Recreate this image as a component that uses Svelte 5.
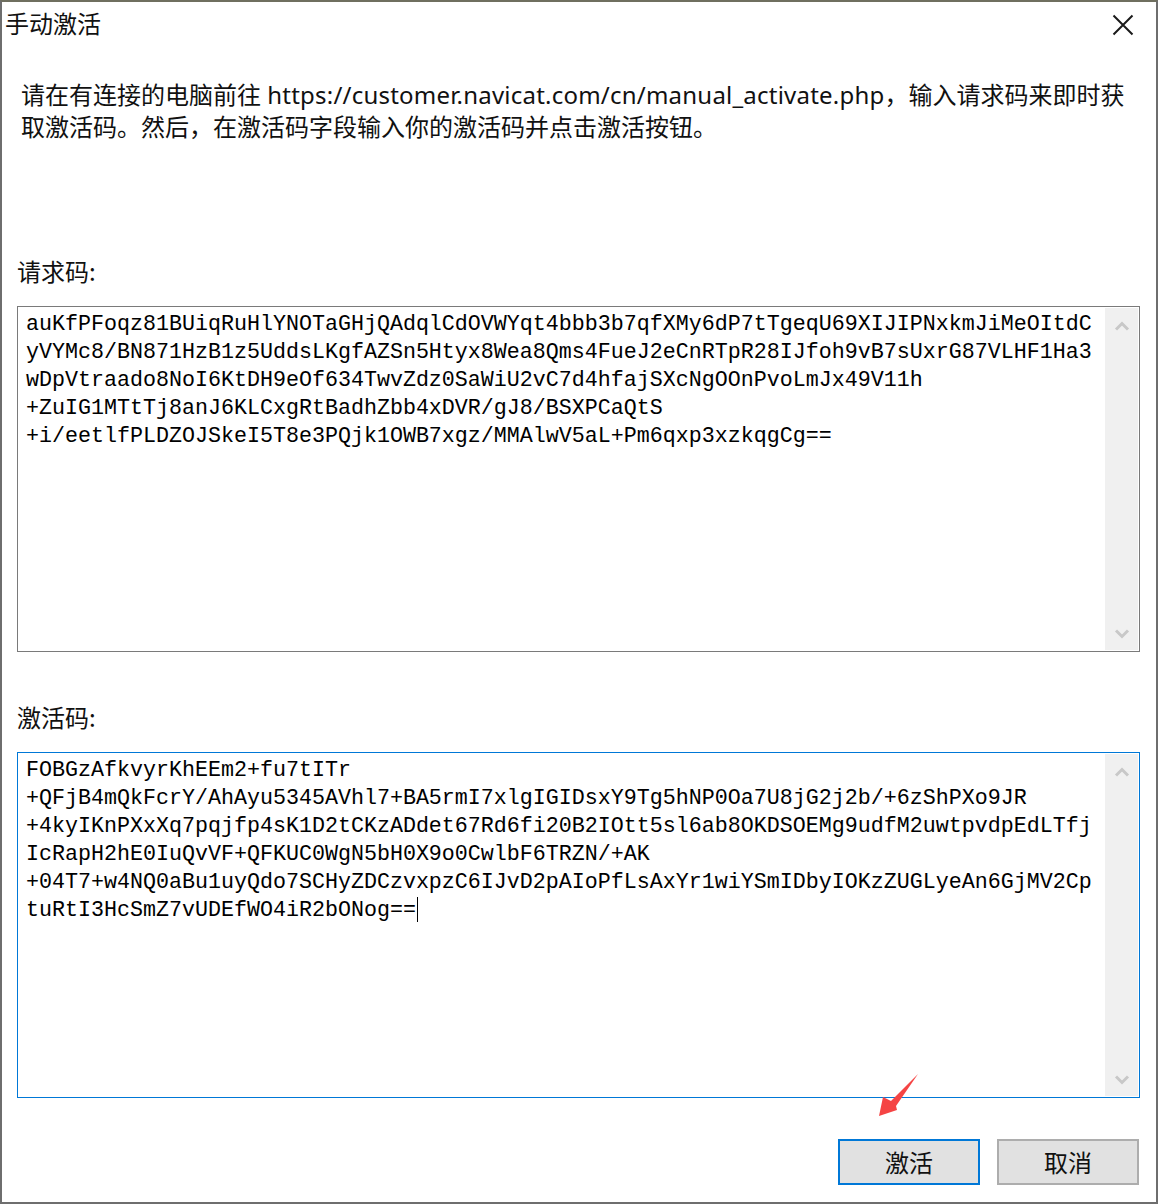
<script>
  const requestLines = [
    'auKfPFoqz81BUiqRuHlYNOTaGHjQAdqlCdOVWYqt4bbb3b7qfXMy6dP7tTgeqU69XIJIPNxkmJiMeOItdC',
    'yVYMc8/BN871HzB1z5UddsLKgfAZSn5Htyx8Wea8Qms4FueJ2eCnRTpR28IJfoh9vB7sUxrG87VLHF1Ha3',
    'wDpVtraado8NoI6KtDH9eOf634TwvZdz0SaWiU2vC7d4hfajSXcNgOOnPvoLmJx49V11h',
    '+ZuIG1MTtTj8anJ6KLCxgRtBadhZbb4xDVR/gJ8/BSXPCaQtS',
    '+i/eetlfPLDZOJSkeI5T8e3PQjk1OWB7xgz/MMAlwV5aL+Pm6qxp3xzkqgCg=='
  ];
  const activationLines = [
    'FOBGzAfkvyrKhEEm2+fu7tITr',
    '+QFjB4mQkFcrY/AhAyu5345AVhl7+BA5rmI7xlgIGIDsxY9Tg5hNP0Oa7U8jG2j2b/+6zShPXo9JR',
    '+4kyIKnPXxXq7pqjfp4sK1D2tCKzADdet67Rd6fi20B2IOtt5sl6ab8OKDSOEMg9udfM2uwtpvdpEdLTfj',
    'IcRapH2hE0IuQvVF+QFKUC0WgN5bH0X9o0CwlbF6TRZN/+AK',
    '+04T7+w4NQ0aBu1uyQdo7SCHyZDCzvxpzC6IJvD2pAIoPfLsAxYr1wiYSmIDbyIOKzZUGLyeAn6GjMV2Cp',
    'tuRtI3HcSmZ7vUDEfWO4iR2bONog=='
  ];
</script>

<div class="dialog">
  <header class="titlebar">
    <span class="title">手动激活</span>
    <button class="close" aria-label="关闭">
      <svg width="22" height="22" viewBox="0 0 22 22">
        <path d="M1.5 1.5 L20.5 20.5 M20.5 1.5 L1.5 20.5" stroke="#1a1a1a" stroke-width="2" fill="none" />
      </svg>
    </button>
  </header>

  <p class="intro">请在有连接的电脑前往 <span class="url">https://customer.navicat.com/cn/manual_activate.php</span>，输入请求码来即时获<br />取激活码。然后，在激活码字段输入你的激活码并点击激活按钮。</p>

  <div class="label first">请求码:</div>
  <div class="field">
    <div class="code">
      {#each requestLines as line}
        <div class="line">{line}</div>
      {/each}
    </div>
    <div class="scrollbar">
      <svg width="16" height="10" viewBox="0 0 16 10"><path d="M2 8.5 L8 2.5 L14 8.5" /></svg>
      <svg width="16" height="10" viewBox="0 0 16 10"><path d="M2 1.5 L8 7.5 L14 1.5" /></svg>
    </div>
  </div>

  <div class="label second">激活码:</div>
  <div class="field focused">
    <div class="code">
      {#each activationLines as line, i}
        <div class="line">{line}{#if i === activationLines.length - 1}<span class="caret"></span>{/if}</div>
      {/each}
    </div>
    <div class="scrollbar">
      <svg width="16" height="10" viewBox="0 0 16 10"><path d="M2 8.5 L8 2.5 L14 8.5" /></svg>
      <svg width="16" height="10" viewBox="0 0 16 10"><path d="M2 1.5 L8 7.5 L14 1.5" /></svg>
    </div>
  </div>

  <footer class="actions">
    <button class="btn primary">激活</button>
    <button class="btn">取消</button>
  </footer>

  <svg class="arrow" width="44" height="48" viewBox="0 0 44 48">
    <polygon points="43,3 21,35 22,39 4,45 8,26 16,30" fill="#f54444" />
  </svg>
</div>

<style>
  :global(body) {
    margin: 0;
    background: #fff;
  }

  .dialog {
    position: relative;
    box-sizing: border-box;
    width: 1158px;
    height: 1204px;
    background: #fff;
    border-top: 2px solid #6f6f5f;
    border-left: 2px solid #6e6e6e;
    border-right: 2px solid #6e6e6e;
    border-bottom: 2px solid #6e6e6e;
    font-family: "Noto Sans CJK SC", "Noto Sans", sans-serif;
    color: #111;
  }

  .titlebar {
    display: flex;
    justify-content: space-between;
    align-items: center;
    height: 46px;
    padding-left: 3px;
    padding-right: 22px;
  }

  .title {
    font-size: 24px;
    line-height: 42px;
    padding-bottom: 4px;
  }

  .close {
    display: flex;
    padding: 0;
    border: 0;
    background: none;
  }

  .intro {
    margin: 31px 0 0 19px;
    font-family: "Noto Sans", "Noto Sans CJK SC", sans-serif;
    font-size: 24px;
    line-height: 32px;
    white-space: nowrap;
  }

  .url {
    letter-spacing: 0.22px;
  }

  .label {
    margin-left: 15px;
    font-size: 24px;
    line-height: 32px;
  }

  .label.first {
    margin-top: 112px;
  }

  .label.second {
    margin-top: 49px;
  }

  .field {
    display: flex;
    box-sizing: border-box;
    width: 1123px;
    height: 346px;
    margin: 19px 0 0 15px;
    padding: 1px;
    border: 1px solid #7a7a7a;
  }

  .field.focused {
    border-color: #0078d7;
  }

  .code {
    flex: 1;
    padding: 3px 0 0 7px;
    font-family: "Liberation Mono", monospace;
    font-size: 21.67px;
    line-height: 28px;
    color: #000;
    white-space: pre;
    overflow: hidden;
  }

  .caret {
    display: inline-block;
    width: 1px;
    height: 25px;
    margin-left: 1px;
    background: #000;
    vertical-align: -6px;
  }

  .scrollbar {
    display: flex;
    flex-direction: column;
    justify-content: space-between;
    align-items: center;
    box-sizing: border-box;
    width: 33px;
    padding: 13px 0 11px;
    background: #f0f0f0;
  }

  .scrollbar path {
    fill: none;
    stroke: #c8c8c8;
    stroke-width: 3;
  }

  .actions {
    display: flex;
    justify-content: flex-end;
    gap: 17px;
    margin-top: 41px;
    padding-right: 17px;
  }

  .btn {
    box-sizing: border-box;
    width: 142px;
    height: 46px;
    padding: 0 0 2px;
    border: 2px solid #adadad;
    background: #e1e1e1;
    font-family: "Noto Sans CJK SC", sans-serif;
    font-size: 24px;
    color: #111;
  }

  .btn.primary {
    border-color: #0078d7;
  }

  .arrow {
    position: absolute;
    left: 873px;
    top: 1069px;
  }
</style>
